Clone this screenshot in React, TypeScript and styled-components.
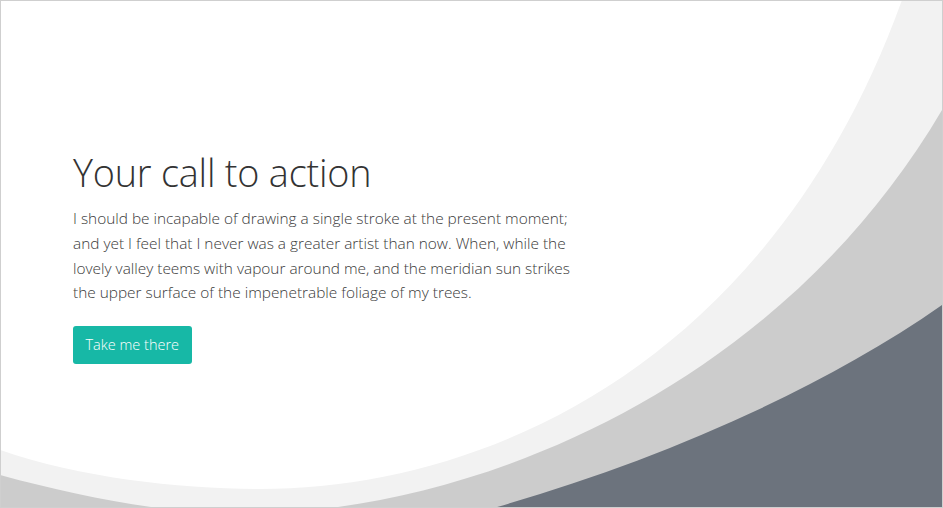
import React from "react";
import styled, { createGlobalStyle } from "styled-components";

const GlobalStyle = createGlobalStyle`
  html, body { margin: 0; padding: 0; background: #ffffff; }
  * { box-sizing: border-box; }
`;

const Frame = styled.section`
  position: relative;
  width: 943px;
  height: 508px;
  border: 1px solid #cfcfcf;
  overflow: hidden;
  background: #ffffff;
  display: flex;
  align-items: center;
  padding-left: 72px;
  font-family: "Open Sans", "Noto Sans", sans-serif;
`;

const Waves = styled.svg`
  position: absolute;
  top: -1px;
  left: -1px;
  width: 943px;
  height: 508px;
  display: block;
`;

const Content = styled.div`
  position: relative;
  z-index: 1;
  width: 505px;
  margin-top: 5px;
`;

const Title = styled.h1`
  margin: 0 0 10px;
  font-size: 37.8px;
  font-weight: 300;
  line-height: 48px;
  color: #333333;
  letter-spacing: -0.2px;
`;

const Lead = styled.p`
  margin: 0 0 20px;
  font-size: 15.4px;
  font-weight: 300;
  line-height: 24.7px;
  color: #3a3a3a;
`;

const CtaButton = styled.button`
  display: inline-flex;
  align-items: center;
  justify-content: center;
  height: 38px;
  padding: 0 12.5px;
  border: none;
  border-radius: 3px;
  background: #17b8a6;
  color: #ffffff;
  font-family: inherit;
  font-size: 14.5px;
  font-weight: 300;
  cursor: pointer;
`;

const CLOSE = "L 1000 -100 L 1000 600 L -100 600 L -100 400 Z";

const LIGHT = `M -100 400 L 0 450 C 80 478, 180 489, 260 489 C 490 489, 772 360, 902 0 L 940 -100 ${CLOSE}`;
const MID = `M -100 440 L 0 475 C 80 497, 170 514, 240 514 C 470 514, 777 390.5, 942 110 L 1000 11 ${CLOSE}`;
const DARK = `M -100 600 L 380 537 C 565 496, 782 417, 942 305 L 1000 264 ${CLOSE}`;

export default function App() {
  return (
    <>
      <GlobalStyle />
      <Frame>
        <Waves viewBox="0 0 943 508" aria-hidden="true">
          <path d={LIGHT} fill="#f2f2f2" />
          <path d={MID} fill="#cccccc" />
          <path d={DARK} fill="#6c737d" />
        </Waves>
        <Content>
          <Title>Your call to action</Title>
          <Lead>
            I should be incapable of drawing a single stroke at the present moment; and yet I feel
            that I never was a greater artist than now. When, while the lovely valley teems with
            vapour around me, and the meridian sun strikes the upper surface of the impenetrable
            foliage of my trees.
          </Lead>
          <CtaButton>Take me there</CtaButton>
        </Content>
      </Frame>
    </>
  );
}
